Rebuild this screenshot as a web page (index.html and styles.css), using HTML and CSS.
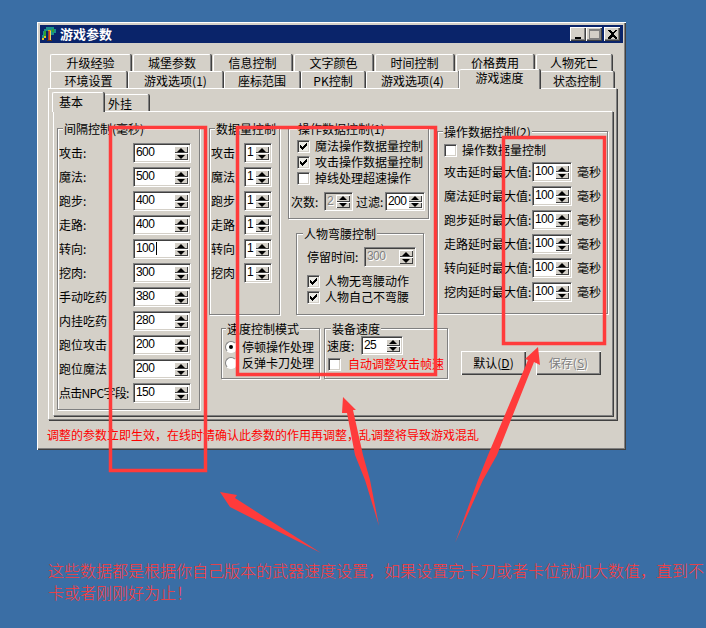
FILE: index.html
```html
<!DOCTYPE html>
<html lang="zh">
<head>
<meta charset="utf-8">
<title>游戏参数</title>
<link rel="stylesheet" href="styles.css">
</head>
<body>
<div class="window">
  <div class="titlebar">
    <svg class="app-icon" viewBox="0 0 16 16" shape-rendering="crispEdges"><path fill="#1a8f8a" d="M5 1h8v2h2v4h-2v2H9V5H5v5H3v2H1V9h1V5h1V3h2z"/><path fill="#2fa12f" d="M3 5h2v5H3zM11 3h2v3h-2z"/><path fill="#e8c020" d="M1 12h2v2H1zM3 10h2v2H3z"/><path fill="#d8a018" d="M7 4h3v1H7z"/><path fill="#8a5a20" d="M7 5h1v10H7z"/><path fill="#e04020" d="M8 5h1v10H8z"/><path fill="#f0d060" d="M9 5h1v10H9z"/><path fill="#5a3010" d="M6 14h5v1H6z"/></svg>
    <span class="title-text">游戏参数</span>
    <div class="caption-btns">
      <span class="cap-btn"><svg viewBox="0 0 9 9" shape-rendering="crispEdges"><path d="M1 7h6v2H1z"/></svg></span>
      <span class="cap-btn cap-max"><svg viewBox="0 0 11 10" shape-rendering="crispEdges"><path fill="#808080" d="M0 0h11v2H0zM0 0h1v10H0zM10 0h1v10h-1zM0 9h11v1H0z"/></svg></span>
      <span class="cap-btn cap-close"><svg viewBox="0 0 9 9" shape-rendering="crispEdges"><path d="M0 0h2l2 2h1l2-2h2L6 3.500v1L9 8v1H7L5 7H4L2 9H0V8l3-3.500v-1z"/></svg></span>
    </div>
  </div>

  <div class="tab-row tab-row-top">
    <span class="tab">升级经验</span><span class="tab">城堡参数</span><span class="tab">信息控制</span><span class="tab">文字颜色</span><span class="tab">时间控制</span><span class="tab">价格费用</span><span class="tab">人物死亡</span>
  </div>
  <div class="tab-row tab-row-bottom">
    <span class="tab">环境设置</span><span class="tab">游戏选项(1)</span><span class="tab">座标范围</span><span class="tab">PK控制</span><span class="tab">游戏选项(4)</span><span class="tab tab-active">游戏速度</span><span class="tab">状态控制</span>
  </div>

  <div class="panel">
    <div class="inner-tabs">
      <span class="tab inner-active">基本</span><span class="tab inner-tab">外挂</span>
    </div>
    <div class="inner-panel">
      <fieldset class="group group-a">
        <div class="legend">间隔控制(毫秒)</div>
        <div class="rows">
          <div class="row"><span class="lbl">攻击:</span><div class="spin spin-a"><span class="val">600</span><span class="btns"><i class="up"></i><i class="down"></i></span></div></div>
          <div class="row"><span class="lbl">魔法:</span><div class="spin spin-a"><span class="val">500</span><span class="btns"><i class="up"></i><i class="down"></i></span></div></div>
          <div class="row"><span class="lbl">跑步:</span><div class="spin spin-a"><span class="val">400</span><span class="btns"><i class="up"></i><i class="down"></i></span></div></div>
          <div class="row"><span class="lbl">走路:</span><div class="spin spin-a"><span class="val">400</span><span class="btns"><i class="up"></i><i class="down"></i></span></div></div>
          <div class="row"><span class="lbl">转向:</span><div class="spin spin-a"><span class="val val-caret">100</span><span class="btns"><i class="up"></i><i class="down"></i></span></div></div>
          <div class="row"><span class="lbl">挖肉:</span><div class="spin spin-a"><span class="val">300</span><span class="btns"><i class="up"></i><i class="down"></i></span></div></div>
          <div class="row"><span class="lbl">手动吃药</span><div class="spin spin-a"><span class="val">380</span><span class="btns"><i class="up"></i><i class="down"></i></span></div></div>
          <div class="row"><span class="lbl">内挂吃药</span><div class="spin spin-a"><span class="val">280</span><span class="btns"><i class="up"></i><i class="down"></i></span></div></div>
          <div class="row"><span class="lbl">跑位攻击</span><div class="spin spin-a"><span class="val">200</span><span class="btns"><i class="up"></i><i class="down"></i></span></div></div>
          <div class="row"><span class="lbl">跑位魔法</span><div class="spin spin-a"><span class="val">200</span><span class="btns"><i class="up"></i><i class="down"></i></span></div></div>
          <div class="row"><span class="lbl lbl-npc">点击NPC字段:</span><div class="spin spin-a"><span class="val">150</span><span class="btns"><i class="up"></i><i class="down"></i></span></div></div>
        </div>
      </fieldset>

      <div class="col-main">
        <div class="top-row">
          <fieldset class="group group-b">
            <div class="legend">数据量控制</div>
            <div class="rows">
              <div class="row"><span class="lbl">攻击</span><div class="spin spin-b"><span class="val">1</span><span class="btns"><i class="up"></i><i class="down"></i></span></div></div>
              <div class="row"><span class="lbl">魔法</span><div class="spin spin-b"><span class="val">1</span><span class="btns"><i class="up"></i><i class="down"></i></span></div></div>
              <div class="row"><span class="lbl">跑步</span><div class="spin spin-b"><span class="val">1</span><span class="btns"><i class="up"></i><i class="down"></i></span></div></div>
              <div class="row"><span class="lbl">走路</span><div class="spin spin-b"><span class="val">1</span><span class="btns"><i class="up"></i><i class="down"></i></span></div></div>
              <div class="row"><span class="lbl">转向</span><div class="spin spin-b"><span class="val">1</span><span class="btns"><i class="up"></i><i class="down"></i></span></div></div>
              <div class="row"><span class="lbl">挖肉</span><div class="spin spin-b"><span class="val">1</span><span class="btns"><i class="up"></i><i class="down"></i></span></div></div>
            </div>
          </fieldset>

          <div class="col-mid">
            <fieldset class="group group-c">
              <div class="legend">操作数据控制(1)</div>
              <div class="checks checks-c">
                <label class="check"><span class="box on"><svg viewBox="0 0 7 7" shape-rendering="crispEdges"><path d="M0 2h1v1h1v1h1V3h1V2h1V1h1V0h1v3H6v1H5v1H4v1H3v1H2V6H1V5H0z"/></svg></span>魔法操作数据量控制</label>
                <label class="check"><span class="box on"><svg viewBox="0 0 7 7" shape-rendering="crispEdges"><path d="M0 2h1v1h1v1h1V3h1V2h1V1h1V0h1v3H6v1H5v1H4v1H3v1H2V6H1V5H0z"/></svg></span>攻击操作数据量控制</label>
                <label class="check"><span class="box"></span>掉线处理超速操作</label>
              </div>
              <div class="row-filter">
                <span class="lbl-count">次数:</span>
                <div class="spin spin-count spin-off"><span class="val">2</span><span class="btns"><i class="up"></i><i class="down"></i></span></div>
                <span class="lbl-filter">过滤:</span>
                <div class="spin spin-filter"><span class="val">200</span><span class="btns"><i class="up"></i><i class="down"></i></span></div>
              </div>
            </fieldset>
            <fieldset class="group group-d">
              <div class="legend">人物弯腰控制</div>
              <div class="row-stay">
                <span class="lbl-stay">停留时间:</span>
                <div class="spin spin-stay spin-off"><span class="val">300</span><span class="btns"><i class="up"></i><i class="down"></i></span></div>
              </div>
              <div class="checks checks-d">
                <label class="check"><span class="box on"><svg viewBox="0 0 7 7" shape-rendering="crispEdges"><path d="M0 2h1v1h1v1h1V3h1V2h1V1h1V0h1v3H6v1H5v1H4v1H3v1H2V6H1V5H0z"/></svg></span>人物无弯腰动作</label>
                <label class="check"><span class="box on"><svg viewBox="0 0 7 7" shape-rendering="crispEdges"><path d="M0 2h1v1h1v1h1V3h1V2h1V1h1V0h1v3H6v1H5v1H4v1H3v1H2V6H1V5H0z"/></svg></span>人物自己不弯腰</label>
              </div>
            </fieldset>
          </div>

          <fieldset class="group group-e">
            <div class="legend">操作数据控制(2)</div>
            <label class="check check-e"><span class="box"></span>操作数据量控制</label>
            <div class="rows rows-e">
              <div class="row"><span class="lbl">攻击延时最大值:</span><div class="spin spin-e"><span class="val">100</span><span class="btns"><i class="up"></i><i class="down"></i></span></div><span class="unit">毫秒</span></div>
              <div class="row"><span class="lbl">魔法延时最大值:</span><div class="spin spin-e"><span class="val">100</span><span class="btns"><i class="up"></i><i class="down"></i></span></div><span class="unit">毫秒</span></div>
              <div class="row"><span class="lbl">跑步延时最大值:</span><div class="spin spin-e"><span class="val">100</span><span class="btns"><i class="up"></i><i class="down"></i></span></div><span class="unit">毫秒</span></div>
              <div class="row"><span class="lbl">走路延时最大值:</span><div class="spin spin-e"><span class="val">100</span><span class="btns"><i class="up"></i><i class="down"></i></span></div><span class="unit">毫秒</span></div>
              <div class="row"><span class="lbl">转向延时最大值:</span><div class="spin spin-e"><span class="val">100</span><span class="btns"><i class="up"></i><i class="down"></i></span></div><span class="unit">毫秒</span></div>
              <div class="row"><span class="lbl">挖肉延时最大值:</span><div class="spin spin-e"><span class="val">100</span><span class="btns"><i class="up"></i><i class="down"></i></span></div><span class="unit">毫秒</span></div>
            </div>
          </fieldset>
        </div>

        <div class="bottom-row">
          <fieldset class="group group-f">
            <div class="legend">速度控制模式</div>
            <div class="radios">
              <label class="radio"><span class="dot on"></span>停顿操作处理</label>
              <label class="radio"><span class="dot"></span>反弹卡刀处理</label>
            </div>
          </fieldset>
          <fieldset class="group group-g">
            <div class="legend">装备速度</div>
            <div class="row-speed">
              <span>速度:</span>
              <div class="spin spin-speed"><span class="val">25</span><span class="btns"><i class="up"></i><i class="down"></i></span></div>
            </div>
            <label class="check check-red"><span class="box"></span>自动调整攻击帧速</label>
          </fieldset>
          <div class="actions">
            <button class="btn" type="button">默认(<u>D</u>)</button>
            <button class="btn btn-off" type="button">保存(<u>S</u>)</button>
          </div>
        </div>
      </div>
    </div>
  </div>
  <div class="message">调整的参数立即生效，在线时请确认此参数的作用再调整，乱调整将导致游戏混乱</div>
</div>

<p class="note">这些数据都是根据你自己版本的武器速度设置，如果设置完卡刀或者卡位就加大数值，直到不卡或者刚刚好为止！</p>

<svg class="marks" viewBox="0 0 706 628" aria-hidden="true">
  <rect class="mark" x="110.500" y="127.500" width="95" height="343"/>
  <rect class="mark" x="237.500" y="127.500" width="198" height="247"/>
  <rect class="mark" x="503.500" y="137.500" width="101" height="206"/>
  <polygon class="arrow" points="220,492 237,495 235,498 321,553 230,507"/>
  <polygon class="arrow" points="343,397 356,410 353,410 363,455 370,480 379,526 365,480 355,455 347,413 342,413"/>
  <polygon class="arrow" points="538,347 540,365 534,362 497,455 483,480 455,543 478,480 488,455 528,360 525,359"/>
</svg>
</body>
</html>
```

FILE: styles.css
```css
* { box-sizing: border-box; }
html, body { margin: 0; padding: 0; }
body {
  position: relative;
  width: 706px;
  height: 628px;
  overflow: hidden;
  background: #3a6ea5;
  font: 12px/16px "Noto Sans CJK SC", "Liberation Sans", sans-serif;
  color: #000;
}

.window {
  width: 589px;
  height: 428px;
  margin: 0 0 0 37px;
  position: relative;
  top: 22px;
  padding: 3px;
  background: #d4d0c8;
  box-shadow: inset 1px 1px 0 #fff, inset -1px -1px 0 #404040, inset -2px -2px 0 #808080;
}

.titlebar {
  height: 18px;
  display: flex;
  align-items: center;
  background: #0a246a;
  color: #fff;
  padding: 0 3px 0 1px;
}
.app-icon { width: 16px; height: 16px; flex: none; }
.title-text { margin-left: 3px; font-size: 13px; font-weight: 700; line-height: 18px; }
.caption-btns { margin-left: auto; display: flex; }
.cap-btn {
  width: 16px;
  height: 14px;
  display: flex;
  align-items: center;
  justify-content: center;
  background: #d4d0c8;
  box-shadow: inset 1px 1px 0 #fff, inset -1px -1px 0 #404040, inset -2px -2px 0 #808080;
}
.cap-btn svg { width: 9px; height: 9px; display: block; }
.cap-max svg { width: 11px; height: 10px; }
.cap-close { margin-left: 2px; }

.tab-row { display: grid; margin-left: 10px; }
.tab-row-top {
  margin-top: 11px;
  height: 17px;
  grid-template-columns: 83px 80px 81px 81px 81px 80px 78px;
}
.tab-row-top .tab { line-height: 15px; }
.tab-row-bottom {
  height: 17px;
  grid-template-columns: 78px 96px 77px 65px 94px 80px 75px;
  position: relative;
  z-index: 2;
}
.tab {
  display: block;
  height: 17px;
  margin-right: 2px;
  text-align: center;
  line-height: 17px;
  background: #d4d0c8;
  border-top: 1px solid #fff;
  border-left: 1px solid #fff;
  border-right: 1px solid #808080;
  border-radius: 2px 2px 0 0;
  box-shadow: 1px 0 0 #404040;
  white-space: nowrap;
}
.tab-row-bottom .tab { margin-right: 1px; }
.tab-row-bottom .tab-active {
  height: 20px;
  margin: -2px 0 -1px -1px;
  line-height: 16px;
  position: relative;
  z-index: 3;
}

.panel {
  width: 569px;
  height: 332px;
  margin-left: 8px;
  padding: 3px 0 0 4px;
  background: #d4d0c8;
  border-top: 1px solid #fff;
  border-left: 1px solid #fff;
  border-right: 1px solid #808080;
  border-bottom: 1px solid #808080;
  box-shadow: 1px 1px 0 #404040;
}

.inner-tabs { display: flex; align-items: flex-end; height: 19px; position: relative; z-index: 2; }
.inner-active {
  width: 52px;
  height: 20px;
  margin: 0 0 -1px -1px;
  padding-left: 6px;
  text-align: left;
  line-height: 18px;
  position: relative;
  z-index: 2;
}
.inner-tab {
  width: 45px;
  margin-right: 0;
  padding-left: 3px;
  text-align: left;
}

.inner-panel {
  width: 560px;
  height: 305px;
  display: flex;
  align-items: flex-start;
  padding: 16px 0 0 3px;
  border-top: 1px solid #fff;
  border-left: 1px solid #fff;
  border-right: 1px solid #808080;
  border-bottom: 1px solid #808080;
  box-shadow: 1px 1px 0 #404040;
}

.group {
  margin: 0;
  padding: 0;
  min-width: 0;
  border: 1px solid #808080;
  box-shadow: inset 1px 1px 0 #fff, 1px 1px 0 #fff;
}
.legend {
  width: fit-content;
  height: 14px;
  line-height: 14px;
  margin: -7px 0 0 5px;
  padding: 0 1px;
  background: #d4d0c8;
  white-space: nowrap;
  position: relative;
}

.group-a { width: 143px; height: 282px; flex: none; }
.group-a .rows { padding: 5px 0 0 1px; }
.group-a .lbl { width: 74px; }
.group-a .lbl-npc { letter-spacing: -0.7px; }

.col-main { margin-left: 9px; width: 399px; flex: none; }
.top-row { display: flex; align-items: flex-start; height: 187px; }
.group-b { width: 71px; height: 187px; }
.group-b .rows { padding: 5px 0 0 1px; }
.group-b .lbl { width: 33px; }

.col-mid { width: 141px; margin-left: 8px; flex: none; }
.group-c { width: 141px; height: 91px; }
.group-c .legend { margin-left: 8px; }
.group-d { width: 128px; height: 82px; margin: 14px 0 0 8px; }
.group-d .legend { margin-left: 6px; }

.group-e { width: 171px; height: 183px; margin: 3px 0 0 8px; }
.check-e { margin: 3px 0 0 6px; height: 14px; }
.rows-e { margin-top: 2px; padding-left: 6px; }
.rows-e .lbl { width: 88px; white-space: nowrap; }
.unit { margin-left: 5px; }

.row { display: flex; align-items: center; height: 24px; }
.lbl { display: block; white-space: nowrap; }

.spin {
  display: flex;
  height: 20px;
  flex: none;
  background: #fff;
  border: 1px solid;
  border-color: #808080 #fff #fff #808080;
  box-shadow: inset 1px 1px 0 #404040, inset -1px -1px 0 #d4d0c8;
  padding: 2px 2px 2px 1px;
}
.val {
  flex: 1;
  min-width: 0;
  padding-left: 1px;
  font-family: "Liberation Sans", sans-serif;
  font-size: 12px;
  line-height: 13px;
  letter-spacing: -0.6px;
  white-space: nowrap;
}
.val-caret::after {
  content: "";
  display: inline-block;
  width: 1px;
  height: 13px;
  margin-left: 2px;
  background: #000;
  vertical-align: top;
}
.btns { width: 14px; flex: none; display: flex; flex-direction: column; }
.btns i {
  flex: 1;
  min-height: 0;
  background: #d4d0c8;
  display: flex;
  align-items: center;
  justify-content: center;
  box-shadow: inset 1px 1px 0 #fff, inset -1px -1px 0 #404040;
}
.up::before, .down::before {
  content: "";
  width: 0;
  height: 0;
  border-left: 4px solid transparent;
  border-right: 4px solid transparent;
}
.up::before { border-bottom: 4px solid #000; }
.down::before { border-top: 4px solid #000; }

.spin-a { width: 58px; }
.spin-b { width: 28px; }
.spin-e { width: 40px; }
.spin-count { width: 29px; height: 19px; }
.spin-filter { width: 40px; height: 19px; }
.spin-stay { width: 52px; margin-left: 2px; }
.spin-speed { width: 42px; height: 19px; margin-left: 1px; }
.spin-off { background: #d4d0c8; }
.spin-off .val { color: #808080; text-shadow: 1px 1px 0 #fff; }

.checks { display: flex; flex-direction: column; }
.checks-c { padding: 2px 0 0 8px; }
.checks-d { padding: 6px 0 0 10px; }
.check { display: flex; align-items: center; height: 16px; white-space: nowrap; }
.box {
  width: 13px;
  height: 13px;
  flex: none;
  margin-right: 5px;
  display: flex;
  align-items: center;
  justify-content: center;
  background: #fff;
  border: 1px solid;
  border-color: #808080 #fff #fff #808080;
  box-shadow: inset 1px 1px 0 #404040, inset -1px -1px 0 #d4d0c8;
}
.box.on { background: #ecebe6; }
.box svg { width: 7px; height: 7px; display: block; }

.row-filter { display: flex; align-items: center; height: 19px; margin: 6px 0 0 2px; }
.lbl-count { width: 33px; white-space: nowrap; }
.lbl-filter { margin-left: 3px; width: 29px; white-space: nowrap; }
.row-stay { display: flex; align-items: center; height: 20px; margin: 6px 0 0 10px; }
.lbl-stay { width: 55px; white-space: nowrap; }

.bottom-row { display: flex; align-items: flex-start; margin-top: 13px; padding-left: 12px; }
.group-f { width: 99px; height: 51px; flex: none; }
.group-f .legend { margin-left: 4px; }
.radios { padding: 3px 0 0 3px; display: flex; flex-direction: column; }
.radio { display: flex; align-items: center; height: 16px; white-space: nowrap; }
.dot {
  width: 12px;
  height: 12px;
  flex: none;
  margin-right: 5px;
  border-radius: 50%;
  background: #fff;
  border: 1px solid;
  border-color: #808080 #fff #fff #808080;
  display: flex;
  align-items: center;
  justify-content: center;
}
.dot.on::after { content: ""; width: 4px; height: 4px; border-radius: 50%; background: #000; }

.group-g { width: 124px; height: 51px; margin-left: 4px; flex: none; }
.group-g .legend { margin-left: 6px; }
.row-speed { display: flex; align-items: center; height: 19px; margin: 0 0 0 2px; }
.row-speed span:first-child { width: 33px; }
.check-red { margin: 1px 0 0 3px; color: #f00; }
.check-red .box { margin-right: 7px; }

.actions { display: flex; gap: 10px; margin: 23px 0 0 13px; }
.btn {
  width: 65px;
  height: 24px;
  padding: 0;
  font: inherit;
  line-height: 22px;
  color: #000;
  background: #d4d0c8;
  border: 0;
  box-shadow: inset 1px 1px 0 #fff, inset -1px -1px 0 #404040, inset -2px -2px 0 #808080;
}
.btn-off { color: #808080; text-shadow: 1px 1px 0 #fff; }

.message {
  margin: 7px 0 0 7px;
  line-height: 16px;
  color: #f00;
  white-space: nowrap;
}

.note {
  position: relative;
  top: 22px;
  width: 658px;
  margin: 109px 0 0 48px;
  font-size: 16px;
  font-weight: 300;
  line-height: 22px;
  color: #ff3b3b;
}

.marks { position: absolute; left: 0; top: 0; width: 706px; height: 628px; pointer-events: none; z-index: 10; }
.mark { fill: none; stroke: #ff3b3b; stroke-width: 3.500; }
.arrow { fill: #ff3b3b; }
```
